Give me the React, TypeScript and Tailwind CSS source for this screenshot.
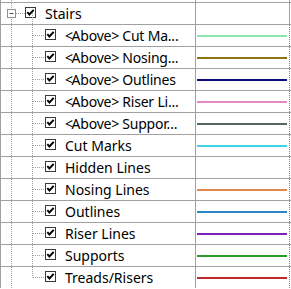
import React from "react";

type Row = { label: string; above?: boolean; line?: string };

const children: Row[] = [
  { label: "Cut Ma...", above: true, line: "bg-[#8fe6ab]" },
  { label: "Nosing...", above: true, line: "bg-[#8a7410]" },
  { label: "Outlines", above: true, line: "bg-[#0a0a78]" },
  { label: "Riser Li...", above: true, line: "bg-[#e28ac8]" },
  { label: "Suppor...", above: true, line: "bg-[#56665a]" },
  { label: "Cut Marks", line: "bg-[#3ed6e6]" },
  { label: "Hidden Lines" },
  { label: "Nosing Lines", line: "bg-[#e0874e]" },
  { label: "Outlines", line: "bg-[#2a86c0]" },
  { label: "Riser Lines", line: "bg-[#7a22b8]" },
  { label: "Supports", line: "bg-[#2a9a2a]" },
  { label: "Treads/Risers", line: "bg-[#c0282a]" },
];

const DOT = "#a0a0a0";

function CheckBox() {
  return (
    <svg width="11" height="11" viewBox="0 0 11 11" className="shrink-0 -mt-[2px]">
      <rect x="0.5" y="0.5" width="10" height="10" fill="white" stroke="#3a3a3a" />
      <path d="M2.3 5.2 L4.4 7.5 L8.7 2.8" fill="none" stroke="#000" strokeWidth="1.9" />
    </svg>
  );
}

// dotted tree guides for the indent area of a row
function Guides({ kind, last }: { kind: "parent" | "child"; last?: boolean }) {
  const w = kind === "parent" ? 24 : 44;
  return (
    <svg width={w} height="21" className="shrink-0">
      <line x1="10.5" y1="0" x2="10.5" y2="21" stroke={DOT} strokeDasharray="1 1" />
      {kind === "parent" ? (
        <>
          <line x1="15" y1="10.5" x2="24" y2="10.5" stroke={DOT} strokeDasharray="1 1" />
          <rect x="6.5" y="6.5" width="8" height="8" fill="white" stroke="#919191" />
          <line x1="8.5" y1="10.5" x2="12.5" y2="10.5" stroke="#4a4a4a" />
        </>
      ) : (
        <>
          <line
            x1="31.5"
            y1="0"
            x2="31.5"
            y2={last ? 10.5 : 21}
            stroke={DOT}
            strokeDasharray="1 1"
          />
          <line x1="32" y1="10.5" x2="44" y2="10.5" stroke={DOT} strokeDasharray="1 1" />
        </>
      )}
    </svg>
  );
}

function Label({ r }: { r: Row }) {
  if (!r.above) {
    return <span className="ml-[9px] leading-none whitespace-nowrap">{r.label}</span>;
  }
  return (
    <span className="ml-[9px] leading-none whitespace-nowrap tracking-[-0.2px]">
      <span className="tracking-[-1.5px]">{"<"}</span>
      {"Above"}
      <span className="tracking-[-0.5px]">{">"}</span> {r.label}
    </span>
  );
}

export default function App() {
  return (
    <div
      className="w-[291px] h-[289px] overflow-hidden bg-white text-[14px] text-black"
      style={{ fontFamily: '"Noto Sans", "Open Sans", sans-serif' }}
    >
      {/* tail of the row scrolled above */}
      <div className="flex h-[2px]">
        <div className="w-[196px] shrink-0 border-l border-r border-[#a0a0a0]">
          <svg width="24" height="2">
            <line x1="10.5" y1="0" x2="10.5" y2="2" stroke={DOT} strokeDasharray="1 1" />
          </svg>
        </div>
        <div className="w-[94px] border-r border-[#a0a0a0]" />
      </div>

      {/* Stairs */}
      <div className="flex h-[22px] border-t border-[#a0a0a0]">
        <div className="w-[196px] shrink-0 border-l border-r border-[#a0a0a0] flex items-center relative">
          <Guides kind="parent" />
          <CheckBox />
          <span className="ml-[9px] leading-none whitespace-nowrap">Stairs</span>
          <svg width="1" height="11" className="absolute left-[31px] bottom-0">
            <line x1="0.5" y1="0" x2="0.5" y2="11" stroke={DOT} strokeDasharray="1 1" />
          </svg>
        </div>
        <div className="w-[94px] border-r border-[#a0a0a0]" />
      </div>

      {children.map((r, i) => (
        <div key={i} className="flex h-[22px] border-t border-[#a0a0a0]">
          <div className="w-[196px] shrink-0 border-l border-r border-[#a0a0a0] flex items-center overflow-hidden">
            <Guides kind="child" last={i === children.length - 1} />
            <CheckBox />
            <Label r={r} />
          </div>
          <div className="w-[94px] border-r border-dotted border-[#808080] flex items-center">
            {r.line && <div className={`ml-px w-[90px] h-[2px] ${r.line}`} />}
          </div>
        </div>
      ))}
    </div>
  );
}
